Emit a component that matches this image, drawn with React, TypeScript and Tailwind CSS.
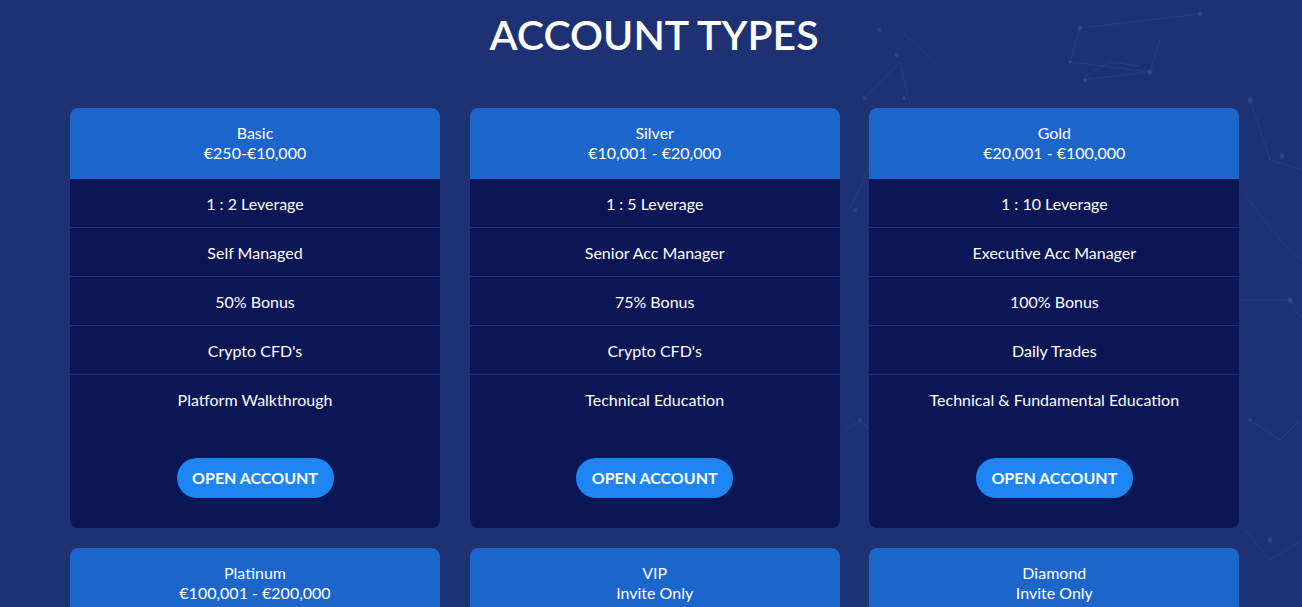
import React from "react";

type Plan = { name: string; price: string; features: string[] };

const plans: Plan[] = [
  { name: "Basic", price: "€250-€10,000", features: ["1 : 2 Leverage", "Self Managed", "50% Bonus", "Crypto CFD's", "Platform Walkthrough"] },
  { name: "Silver", price: "€10,001 - €20,000", features: ["1 : 5 Leverage", "Senior Acc Manager", "75% Bonus", "Crypto CFD's", "Technical Education"] },
  { name: "Gold", price: "€20,001 - €100,000", features: ["1 : 10 Leverage", "Executive Acc Manager", "100% Bonus", "Daily Trades", "Technical & Fundamental Education"] },
  { name: "Platinum", price: "€100,001 - €200,000", features: ["1 : 20 Leverage", "Executive Acc Manager", "125% Bonus", "Daily Trades", "Advanced Education"] },
  { name: "VIP", price: "Invite Only", features: ["1 : 50 Leverage", "Executive Acc Manager", "150% Bonus", "Daily Trades", "Advanced Education"] },
  { name: "Diamond", price: "Invite Only", features: ["1 : 100 Leverage", "Executive Acc Manager", "200% Bonus", "Daily Trades", "Advanced Education"] },
];

function Card({ plan }: { plan: Plan }) {
  return (
    <div className="w-[370px] rounded-[8px] overflow-hidden bg-[#0b1656] flex flex-col">
      <div className="h-[71px] bg-[#1c66cb] flex flex-col items-center justify-center text-[16px] leading-[20px] text-white pb-[1px]">
        <div>{plan.name}</div>
        <div>{plan.price}</div>
      </div>
      <div className="flex flex-col">
        {plan.features.map((f, i) => (
          <div
            key={i}
            className={
              "h-[49px] flex items-center justify-center text-[16px] text-white pt-[1px] " +
              (i < plan.features.length - 1 ? "border-b border-[#1f2f78]" : "")
            }
          >
            {f}
          </div>
        ))}
      </div>
      <div className="flex justify-center pt-[34px] pb-[30px]">
        <button className="h-[40px] w-[157px] rounded-full bg-[#1e86f3] text-white text-[16px] font-bold uppercase">
          Open Account
        </button>
      </div>
    </div>
  );
}

export default function App() {
  return (
    <div
      className="relative w-[1302px] h-[607px] overflow-hidden bg-[#1e3172]"
      style={{ fontFamily: "Lato, 'Open Sans', sans-serif" }}
    >
      <svg className="absolute inset-0 pointer-events-none" width="1302" height="607">
        <g stroke="#3a56a0" strokeOpacity="0.3" strokeWidth="1" fill="none">
          <path d="M1080 28 L1200 14 M1080 28 L1070 62 L1150 72 L1080 80 M1150 72 L1160 40" />
          <path d="M900 30 L930 58 M865 98 L900 62 L910 105 M1085 76 L1110 62 L1140 66" />
          <path d="M1250 100 L1270 160 L1302 170 M1245 195 L1280 240 L1302 260" />
          <path d="M850 210 L870 165 M845 430 L860 420 L880 440" />
          <path d="M1240 300 L1290 300 L1302 320 M1250 420 L1280 440 L1300 420" />
          <path d="M1245 530 L1270 560 L1302 540" />
        </g>
        <g fill="#4a66b0" fillOpacity="0.4">
          <circle cx="1080" cy="28" r="2.5" />
          <circle cx="1200" cy="14" r="2.5" />
          <circle cx="1070" cy="62" r="2" />
          <circle cx="1150" cy="72" r="2.5" />
          <circle cx="1085" cy="80" r="2" />
          <circle cx="879" cy="30" r="2" />
          <circle cx="897" cy="55" r="2" />
          <circle cx="865" cy="98" r="2" />
          <circle cx="904" cy="98" r="2" />
          <circle cx="1250" cy="100" r="2.5" />
          <circle cx="1282" cy="156" r="2.5" />
          <circle cx="1290" cy="300" r="2.5" />
          <circle cx="1250" cy="420" r="2" />
          <circle cx="1270" cy="540" r="2.5" />
          <circle cx="860" cy="420" r="2" />
          <circle cx="855" cy="210" r="2" />
        </g>
      </svg>
      <div className="relative flex flex-col">
        <h1 className="text-center text-white text-[41px] leading-[42px] font-semibold pt-[14px] pl-[6px]">
          ACCOUNT TYPES
        </h1>
        <div className="ml-[70px] mt-[52px] w-[1170px] grid grid-cols-3 gap-x-[29px] gap-y-[20px]">
          {plans.map((p) => (
            <Card key={p.name} plan={p} />
          ))}
        </div>
      </div>
    </div>
  );
}
